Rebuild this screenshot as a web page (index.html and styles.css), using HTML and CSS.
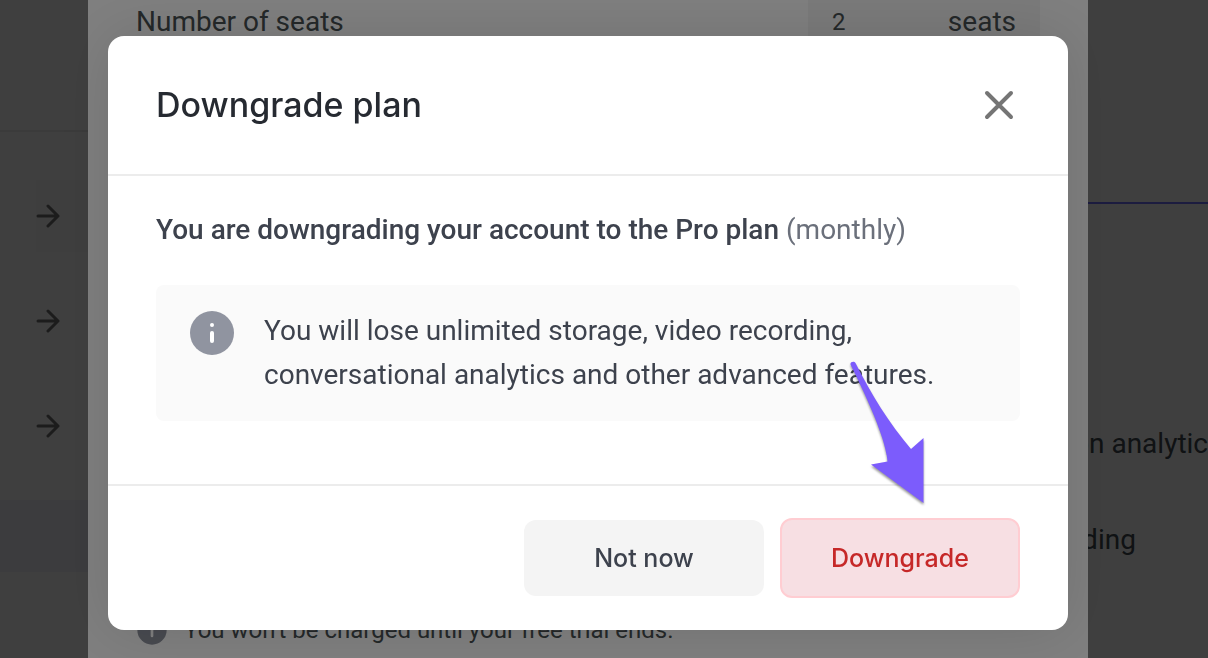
FILE: index.html
```html
<!DOCTYPE html>
<html lang="en">
<head>
    <meta charset="UTF-8">
    <meta name="viewport" content="width=device-width, initial-scale=1.0">
    <title>Downgrade plan</title>
    <link rel="stylesheet" href="styles.css">
</head>
<body>
    <!-- Page -->
    <div class="page">
        <aside class="sidebar">
            <div class="sidebar-top"></div>
            <div class="sidebar-item tinted">
                <svg class="arrow-icon" viewBox="0 0 24 24"><path d="M2 12h20M12 2l10 10l-10 10"/></svg>
            </div>
            <div class="sidebar-item">
                <svg class="arrow-icon" viewBox="0 0 24 24"><path d="M2 12h20M12 2l10 10l-10 10"/></svg>
            </div>
            <div class="sidebar-item">
                <svg class="arrow-icon" viewBox="0 0 24 24"><path d="M2 12h20M12 2l10 10l-10 10"/></svg>
            </div>
            <div class="sidebar-band"></div>
        </aside>
        <main class="plans">
            <div class="plan-head"></div>
            <ul class="plan-features">
                <li>Conversation analytics</li>
                <li>Video recording</li>
            </ul>
        </main>
    </div>

    <!-- Checkout dialog -->
    <div class="overlay">
        <section class="checkout">
            <div class="seats-row">
                <label for="seats">Number of seats</label>
                <div class="seats-field">
                    <input id="seats" type="text" value="2">
                    <span>seats</span>
                </div>
            </div>
            <div class="trial-note">
                <svg class="note-icon" viewBox="0 0 48 48">
                    <circle cx="24" cy="24" r="22"/>
                    <path d="M24 24v9"/>
                    <path d="M24 16v.1"/>
                </svg>
                <p>You won't be charged until your free trial ends.</p>
            </div>
        </section>
    </div>

    <!-- Downgrade dialog -->
    <div class="overlay">
        <section class="modal" role="dialog" aria-labelledby="modalTitle">
            <header class="modal-header">
                <h1 id="modalTitle">Downgrade plan</h1>
                <button class="close-btn" type="button" aria-label="Close">
                    <svg viewBox="0 0 42 42"><path d="M9 9l24 24M33 9l-24 24"/></svg>
                </button>
            </header>
            <div class="modal-body">
                <h2>You are downgrading your account to the Pro plan <span class="period">(monthly)</span></h2>
                <div class="notice">
                    <svg class="info-icon" viewBox="0 0 48 48">
                        <circle cx="24" cy="24" r="22"/>
                        <path d="M24 24v8"/>
                        <path d="M24 16v.1"/>
                    </svg>
                    <p>You will lose unlimited storage, video recording, conversational analytics and other advanced features.</p>
                </div>
            </div>
            <footer class="modal-footer">
                <button class="btn" type="button">Not now</button>
                <div class="pointed">
                    <button class="btn btn-danger" type="button">Downgrade</button>
                    <svg class="pointer" viewBox="848 358 80 148">
                        <path d="M850.5 364.5C850 361.5 854.5 361 855.5 363C871 394 889 423 911 449L923.5 438L923.5 503L871 464.5L887.5 461.5C886 440 869 402 850.5 364.5Z"/>
                    </svg>
                </div>
            </footer>
        </section>
    </div>
</body>
</html>
```

FILE: styles.css
```css
* {
    margin: 0;
    padding: 0;
    box-sizing: border-box;
}

body {
    font-family: Roboto, "Liberation Sans", sans-serif;
    font-size: 28px;
    line-height: 44px;
    color: #3d424d;
    background-color: #fff;
    overflow: hidden;
}

svg {
    display: block;
    flex-shrink: 0;
    fill: none;
    stroke-linecap: round;
    stroke-linejoin: round;
}

/* Page */
.page {
    display: flex;
    justify-content: space-between;
    height: 100vh;
    overflow: hidden;
}

.sidebar {
    width: 88px;
}

.sidebar-top {
    height: 132px;
    margin-bottom: 48px;
    border-bottom: 2px solid #ececec;
}

.sidebar-item {
    display: flex;
    align-items: center;
    height: 72px;
    margin: 0 0 33px 36px;
}

.tinted {
    background-color: #fafafa;
}

.arrow-icon {
    width: 24px;
    height: 24px;
    stroke: #707070;
    stroke-width: 3;
}

.sidebar-band {
    height: 72px;
    margin-top: 38px;
    background-color: #f2f2fa;
}

.plans {
    width: 268px;
    white-space: nowrap;
}

.plan-head {
    height: 204px;
    margin-bottom: 218px;
    border-bottom: 2px solid #7070ff;
}

.plan-features {
    display: grid;
    gap: 52px;
    list-style: none;
    color: #404a50;
}

/* Overlays stack, each one darkens what is under it */
.overlay {
    position: fixed;
    inset: 0;
    display: flex;
    justify-content: center;
    align-items: flex-start;
    padding-right: 32px;
    background-color: rgba(0, 0, 0, 0.5);
}

/* Checkout dialog */
.checkout {
    display: flex;
    flex-direction: column;
    justify-content: space-between;
    width: 100%;
    max-width: 1000px;
    height: 100%;
    padding: 0 48px 6px;
    background-color: #fff;
    color: #485052;
}

.seats-row {
    display: flex;
    justify-content: space-between;
}

.seats-field {
    display: flex;
    width: 232px;
    padding: 0 24px;
    background-color: #f4f4f4;
}

.seats-field input {
    flex: 1;
    min-width: 0;
    border: none;
    background: none;
    font: inherit;
    font-size: 24px;
    color: inherit;
}

.trial-note {
    display: flex;
    align-items: center;
    gap: 16px;
    font-size: 24px;
}

.note-icon {
    width: 32px;
    height: 32px;
}

.note-icon circle,
.info-icon circle {
    fill: #9094a0;
}

.note-icon path,
.info-icon path {
    stroke: #fff;
    stroke-width: 4;
}

/* Downgrade dialog */
.modal {
    width: 100%;
    max-width: 960px;
    margin-top: 36px;
    border-radius: 16px;
    background-color: #fff;
    box-shadow: 0 0 60px rgba(0, 0, 0, 0.12);
}

.modal-header {
    display: flex;
    justify-content: space-between;
    align-items: center;
    padding: 47px 48px;
    border-bottom: 2px solid #ececec;
}

h1 {
    font-family: Inter, "Open Sans", sans-serif;
    font-size: 34px;
    font-weight: 500;
    color: #262a31;
}

.close-btn {
    border: none;
    background: none;
    cursor: pointer;
}

.close-btn svg {
    width: 42px;
    height: 42px;
    stroke: #757575;
    stroke-width: 4;
}

.modal-body {
    padding: 32px 48px 63px;
}

h2 {
    margin-bottom: 33px;
    font-size: 28px;
    font-weight: 500;
}

.period {
    font-weight: 400;
    color: #6b707b;
}

.notice {
    display: flex;
    gap: 28px;
    padding: 24px 32px;
    border-radius: 8px;
    background-color: #fafafa;
}

.info-icon {
    width: 48px;
    height: 48px;
}

.modal-footer {
    display: flex;
    justify-content: flex-end;
    align-items: center;
    gap: 16px;
    padding: 32px 48px;
    border-top: 2px solid #ececec;
}

.btn {
    width: 240px;
    height: 76px;
    border: none;
    border-radius: 12px;
    background-color: #f4f4f4;
    color: #3d424d;
    font-family: Inter, "Open Sans", sans-serif;
    font-size: 25px;
    font-weight: 500;
    cursor: pointer;
}

.btn-danger {
    display: block;
    height: 80px;
    border: 2px solid #ffcdd2;
    background-color: #f7dfe3;
    color: #c62828;
}

.pointed {
    position: relative;
}

.pointer {
    position: absolute;
    left: 68px;
    bottom: 92px;
    width: 80px;
    height: 148px;
    fill: #7c5cfc;
    filter: drop-shadow(0 2px 1px rgba(0, 0, 0, 0.4));
    pointer-events: none;
}
```
